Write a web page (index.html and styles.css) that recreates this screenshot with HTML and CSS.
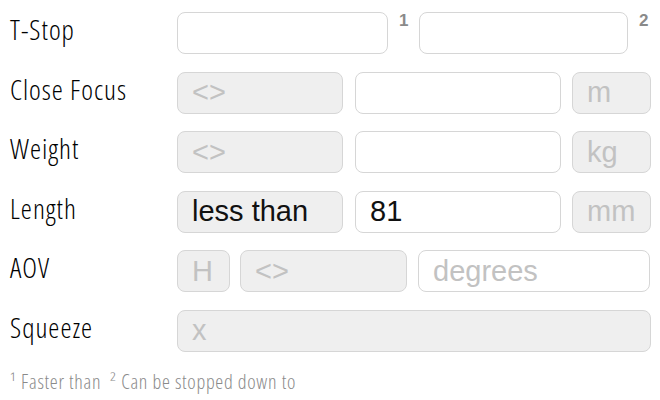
FILE: index.html
```html
<!DOCTYPE html>
<html>
<head>
<meta charset="utf-8">
<link rel="stylesheet" href="styles.css">
</head>
<body>
<div class="form">
  <div class="row">
    <div class="label">T-Stop</div>
    <div class="field white w211"></div>
    <div class="sup">1</div>
    <div class="field white w209"></div>
    <div class="sup">2</div>
  </div>
  <div class="row">
    <div class="label">Close Focus</div>
    <div class="field gray w166 ph">&lt;&gt;</div>
    <div class="field white w206"></div>
    <div class="field gray w79 ph">m</div>
  </div>
  <div class="row">
    <div class="label">Weight</div>
    <div class="field gray w166 ph">&lt;&gt;</div>
    <div class="field white w206"></div>
    <div class="field gray w79 ph">kg</div>
  </div>
  <div class="row">
    <div class="label">Length</div>
    <div class="field gray w166 val">less than</div>
    <div class="field white w206 val">81</div>
    <div class="field gray w79 ph">mm</div>
  </div>
  <div class="row">
    <div class="label">AOV</div>
    <div class="field gray w53 ph">H</div>
    <div class="field gray w167 ph">&lt;&gt;</div>
    <div class="field white w232 ph">degrees</div>
  </div>
  <div class="row">
    <div class="label">Squeeze</div>
    <div class="field gray w474 ph">x</div>
  </div>
  <div class="note">¹ Faster than &nbsp;² Can be stopped down to</div>
</div>
</body>
</html>
```
FILE: styles.css
```css
html, body {
  margin: 0;
  padding: 0;
  background: #ffffff;
}
.form {
  display: flex;
  flex-direction: column;
  gap: 17.6px;
  padding: 12px 0 0 10px;
}
.row {
  display: flex;
  align-items: center;
  height: 42px;
}
.label {
  width: 167px;
  flex: none;
  box-sizing: border-box;
  padding-bottom: 8px;
  font-family: "Open Sans", sans-serif;
  font-stretch: 75%;
  font-weight: 360;
  font-size: 28px;
  letter-spacing: 1px;
  color: #000;
}
.field {
  flex: none;
  box-sizing: border-box;
  height: 42px;
  border: 1px solid #d6d6d6;
  border-radius: 8px;
  display: flex;
  align-items: center;
  padding-left: 14px;
  font-family: "Liberation Sans", Arial, sans-serif;
  font-size: 29px;
  margin-right: 11px;
}
.white { background: #ffffff; }
.gray { background: #efefef; }
.ph { color: #c2c2c2; }
.val { color: #111; }
.w211 { width: 211px; }
.w209 { width: 209px; }
.w166 { width: 166px; margin-right: 12px; }
.w206 { width: 206px; }
.w79 { width: 79px; }
.w53 { width: 53px; margin-right: 10px; }
.w167 { width: 167px; }
.w232 { width: 232px; }
.w474 { width: 474px; }
.sup {
  align-self: flex-start;
  width: 8px;
  margin-right: 12px;
  font-family: "Liberation Sans", Arial, sans-serif;
  font-weight: bold;
  font-size: 17px;
  color: #8a8a8a;
  line-height: 17px;
}
.note {
  margin-top: -2px;
  font-family: "Open Sans", sans-serif;
  font-stretch: 75%;
  font-weight: 360;
  font-size: 20px;
  letter-spacing: 0.7px;
  color: #8a8a8a;
}
```
